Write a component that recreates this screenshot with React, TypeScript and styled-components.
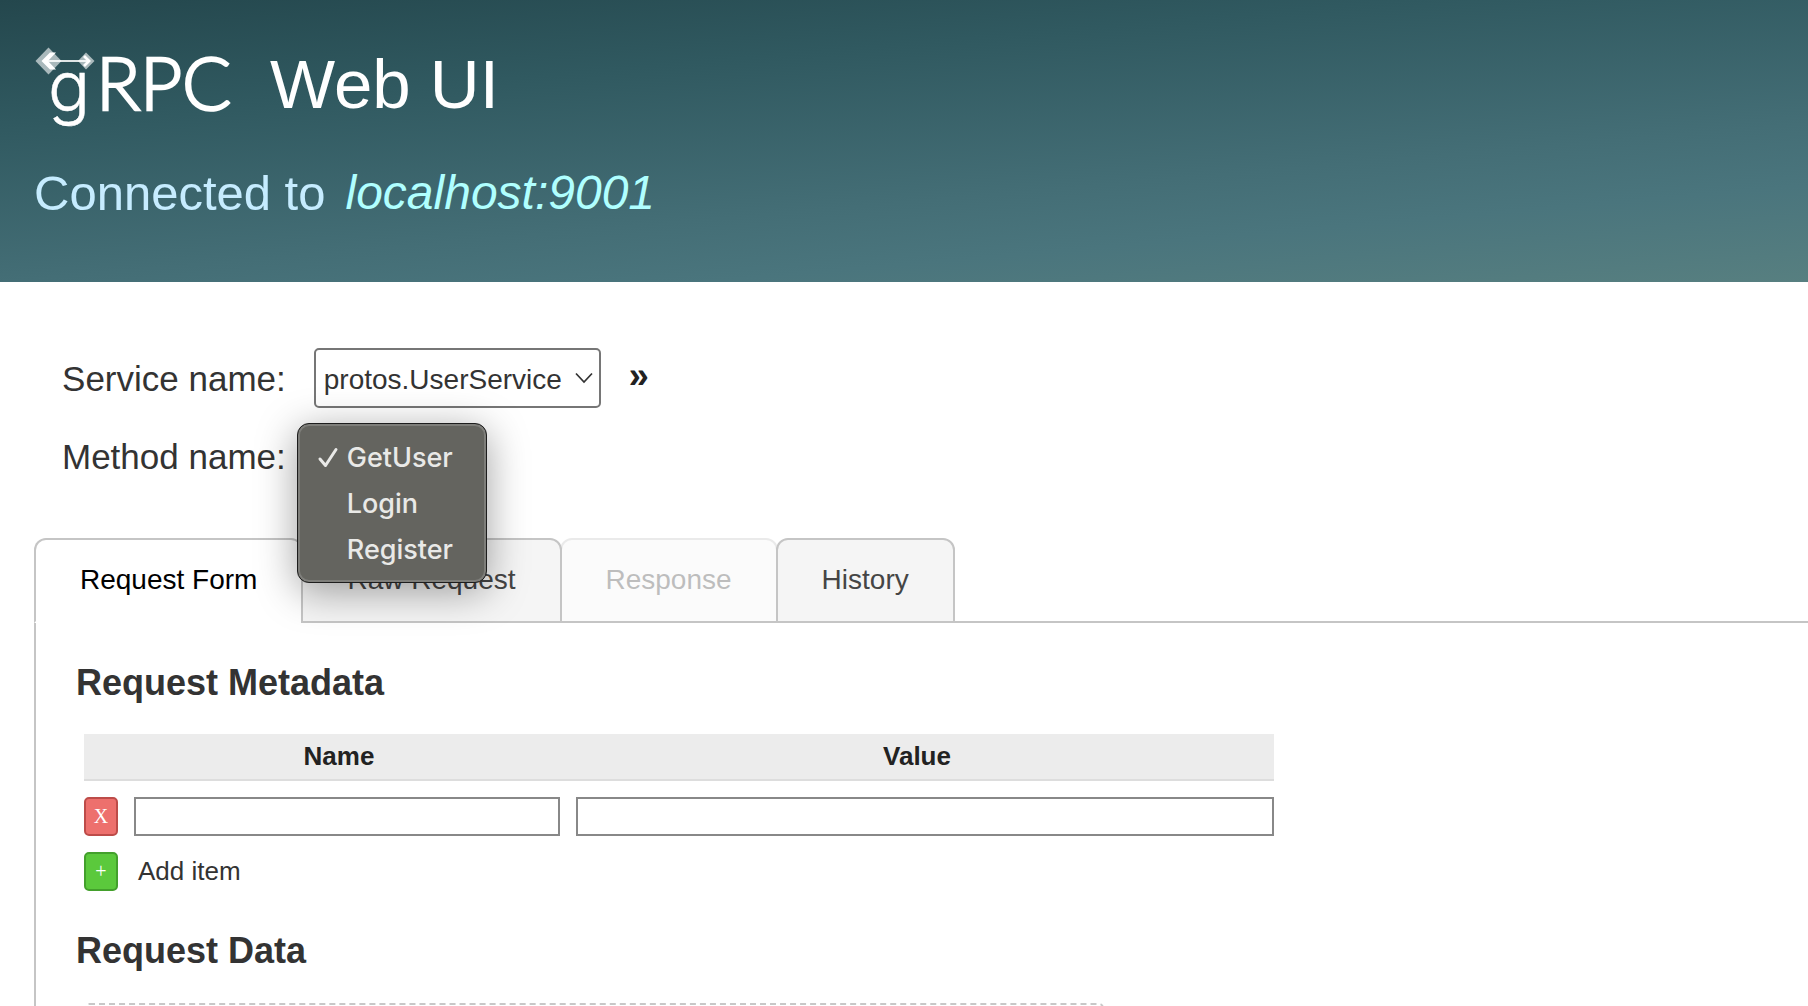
import React, { useState } from "react";
import styled, { createGlobalStyle } from "styled-components";

const sans = `"Liberation Sans", Arial, Helvetica, sans-serif`;

const GlobalStyle = createGlobalStyle`
  *, *::before, *::after { box-sizing: border-box; }
  body { margin: 0; background: #fff; color: #333; font-family: ${sans}; }
`;

const Page = styled.div`
  height: 100vh;
  overflow: hidden;
`;

const Header = styled.header`
  padding: 43px 34px 59px;
  background: linear-gradient(175deg, #24474d 0%, #305960 28%, #446e76 64%, #4a757d 78%, #577f80 100%);
`;

const Title = styled.h1`
  display: flex;
  align-items: center;
  gap: 36px;
  margin: 0;
  color: #fff;
  font-size: 69px;
  font-weight: 400;
  line-height: 84px;
`;

const Logo = styled.svg`
  flex: none;
  width: 200px;
  height: 84px;
  overflow: visible;
`;

const Target = styled.h2`
  display: flex;
  gap: 20px;
  margin: 36px 0 0;
  color: #c6ecff;
  font-size: 49px;
  font-weight: 400;
  line-height: 60px;
`;

const Host = styled.em`
  color: #b0ffff;
  font-size: 48px;
`;

const Main = styled.main`
  padding: 66px 0 0 34px;
`;

const Form = styled.form`
  display: grid;
  grid-template-columns: max-content max-content max-content;
  grid-auto-rows: 60px;
  align-items: center;
  gap: 18px 28px;
  padding-left: 28px;
`;

const FieldLabel = styled.label`
  padding-top: 2px;
  text-align: right;
  font-size: 35px;
  line-height: 60px;
`;

const SelectBox = styled.div`
  display: grid;
  grid-template-columns: auto 16px;
  align-items: center;
  justify-self: start;
  height: 60px;
  padding-right: 8px;
  border: 2px solid #767676;
  border-radius: 5px;
  background: #fff;
`;

const Select = styled.select`
  grid-area: 1 / 1 / 2 / 3;
  height: 56px;
  padding: 2px 28px 0 8px;
  border: 0;
  appearance: none;
  background: transparent;
  color: #333;
  font: 28px ${sans};
`;

const Chevron = styled.svg`
  grid-area: 1 / 2;
  width: 18px;
  height: 12px;
  pointer-events: none;
`;

const ExpandButton = styled.button`
  padding: 0 0 4px;
  border: 0;
  background: none;
  color: #222;
  font: bold 36px/48px ${sans};
`;

const MenuAnchor = styled.div`
  position: relative;
`;

const MenuSpacer = styled.div`
  height: 60px;
`;

const Menu = styled.ul`
  position: absolute;
  z-index: 2;
  top: -3px;
  left: -17px;
  width: 190px;
  margin: 0;
  padding: 11px 2px 9px;
  border: 1px solid #1d1d1d;
  border-radius: 12px;
  background: #64645f;
  box-shadow: inset 0 0 0 2px #7e7e7a, 0 8px 40px rgba(0, 0, 0, 0.38);
  list-style: none;
`;

const MenuItem = styled.button`
  display: flex;
  align-items: center;
  gap: 8px;
  width: 100%;
  height: 46px;
  padding: 0 0 0 17px;
  border: 0;
  background: none;
  color: #e9e9e7;
  font: 500 27px/46px Inter, ${sans};
`;

const Check = styled.svg<{ $on: boolean }>`
  flex: none;
  width: 22px;
  height: 22px;
  visibility: ${(p) => (p.$on ? "visible" : "hidden")};
`;

const Tabs = styled.div`
  display: flex;
  margin: 52px 0 -2px;
`;

const Tab = styled.button<{ $active: boolean }>`
  position: relative;
  height: 85px;
  padding: 0 44px 2px;
  border: 2px solid #c5c5c5;
  border-bottom-color: ${(p) => (p.$active ? "#fff" : "#c5c5c5")};
  border-radius: 12px 12px 0 0;
  background: ${(p) => (p.$active ? "#fff" : "#f5f5f5")};
  color: ${(p) => (p.$active ? "#000" : "#454545")};
  font: 28px ${sans};

  & + & { margin-left: -2px; }

  &:disabled { opacity: 0.35; }
`;

const Panel = styled.section`
  padding: 38px 40px 0;
  border: solid #c5c5c5;
  border-width: 2px 0 0 2px;
`;

const SectionTitle = styled.h2`
  margin: 0;
  font-size: 36px;
  font-weight: 700;
  line-height: 44px;
`;

const MetadataTable = styled.table`
  width: 100%;
  max-width: 1190px;
  margin: 29px 8px 38px;
  border-collapse: collapse;
  table-layout: fixed;
  font-size: 26px;
`;

const ActionCol = styled.col`
  width: 34px;
`;

const NameCol = styled.col`
  width: 442px;
`;

const HeadCell = styled.th`
  height: 46px;
  padding: 0 0 2px;
  border-bottom: 2px solid #ddd;
  background: #ececec;
  color: #222;
  line-height: 30px;
`;

const Cell = styled.td`
  padding: 16px 0 0;
  line-height: 39px;

  & + & { padding-left: 16px; }
`;

const AddLabel = styled.label`
  display: block;
  padding-left: 4px;
`;

const TextInput = styled.input`
  display: block;
  width: 100%;
  height: 39px;
  padding: 0 6px;
  border: 2px solid #888;
  border-radius: 0;
  background: #fff;
  font: 26px ${sans};
`;

const IconButton = styled.button<{ $tone: "remove" | "add" }>`
  display: block;
  width: 34px;
  height: 39px;
  padding: 0 0 2px;
  border: 2px solid ${(p) => (p.$tone === "add" ? "#43a02c" : "#bd4c49")};
  border-radius: 5px;
  background: ${(p) => (p.$tone === "add" ? "#5bc93c" : "#ed706d")};
  color: #fff;
  font: 20px/30px "Liberation Serif", "Times New Roman", serif;
`;

const DataBox = styled.div`
  width: 100%;
  max-width: 1020px;
  height: 320px;
  margin: 30px 8px 0;
  border: 2px dashed #c8c8c8;
  border-radius: 5px;
`;

const METHODS = ["GetUser", "Login", "Register"];
const TABS = ["Request Form", "Raw Request", "Response", "History"];

function GrpcLogo() {
  return (
    <Logo viewBox="0 0 200 84" role="img" aria-label="gRPC">
      <path d="M1.500 18 L14.500 4.500 L27.500 18 L14.500 31.500 Z" fill="#fff" fillOpacity="0.6" />
      <path d="M44 18 L52 9.500 L60.500 18 L52 26.500 Z" fill="#fff" fillOpacity="0.6" />
      <path d="M16 9.500 H22 L14 18 L22 26.500 H16 L7.500 18 Z" fill="#fff" />
      <path d="M50 13 L55 18 L50 23" fill="none" stroke="#fff" strokeWidth="2.800" />
      <path d="M13 18 H54" stroke="#fff" strokeOpacity="0.85" strokeWidth="2" />
      <g fill="#fff" stroke="#fff" fontFamily="Lato, sans-serif" fontSize="73" fontWeight="300">
        <text x="14" y="68" fontFamily="Inter, sans-serif" fontSize="70" strokeWidth="0.500">g</text>
        <g strokeWidth="2.400">
          <text x="62" y="67">R</text>
          <text x="106" y="67">P</text>
          <text x="148" y="67">C</text>
        </g>
      </g>
    </Logo>
  );
}

export default function App() {
  const [method, setMethod] = useState("GetUser");
  const [tab, setTab] = useState("Request Form");

  return (
    <Page>
      <GlobalStyle />
      <Header>
        <Title>
          <GrpcLogo />
          Web UI
        </Title>
        <Target>
          Connected to <Host>localhost:9001</Host>
        </Target>
      </Header>
      <Main>
        <Form onSubmit={(e) => e.preventDefault()}>
          <FieldLabel htmlFor="service">Service name:</FieldLabel>
          <SelectBox>
            <Select id="service" defaultValue="protos.UserService">
              <option>protos.UserService</option>
            </Select>
            <Chevron viewBox="0 0 18 12" fill="none" stroke="#333" strokeWidth="1.700">
              <path d="M1 1.500 L9 10 L17 1.500" />
            </Chevron>
          </SelectBox>
          <ExpandButton type="button" aria-label="Show service description">»</ExpandButton>

          <FieldLabel id="method-label" htmlFor={`method-${method}`}>Method name:</FieldLabel>
          <MenuAnchor>
            <MenuSpacer />
            <Menu role="listbox" aria-labelledby="method-label">
              {METHODS.map((name) => (
                <li key={name} role="presentation">
                  <MenuItem
                    id={`method-${name}`}
                    type="button"
                    role="option"
                    aria-selected={name === method}
                    onClick={() => setMethod(name)}
                  >
                    <Check $on={name === method} viewBox="0 0 22 22" fill="none" stroke="#e9e9e7" strokeWidth="3" strokeLinecap="round" strokeLinejoin="round">
                      <path d="M3 12 L8.500 18.500 L19 2.500" />
                    </Check>
                    {name}
                  </MenuItem>
                </li>
              ))}
            </Menu>
          </MenuAnchor>
        </Form>

        <Tabs role="tablist">
          {TABS.map((name) => (
            <Tab
              key={name}
              type="button"
              role="tab"
              aria-selected={name === tab}
              $active={name === tab}
              disabled={name === "Response"}
              onClick={() => setTab(name)}
            >
              {name}
            </Tab>
          ))}
        </Tabs>

        <Panel role="tabpanel">
          <SectionTitle>Request Metadata</SectionTitle>
          <MetadataTable>
            <colgroup>
              <ActionCol />
              <NameCol />
              <col />
            </colgroup>
            <thead>
              <tr>
                <HeadCell />
                <HeadCell scope="col">Name</HeadCell>
                <HeadCell scope="col">Value</HeadCell>
              </tr>
            </thead>
            <tbody>
              <tr>
                <Cell>
                  <IconButton type="button" $tone="remove" aria-label="Remove item">X</IconButton>
                </Cell>
                <Cell>
                  <TextInput type="text" aria-label="Name" />
                </Cell>
                <Cell>
                  <TextInput type="text" aria-label="Value" />
                </Cell>
              </tr>
              <tr>
                <Cell>
                  <IconButton type="button" id="add-item" $tone="add">+</IconButton>
                </Cell>
                <Cell colSpan={2}>
                  <AddLabel htmlFor="add-item">Add item</AddLabel>
                </Cell>
              </tr>
            </tbody>
          </MetadataTable>
          <SectionTitle>Request Data</SectionTitle>
          <DataBox />
        </Panel>
      </Main>
    </Page>
  );
}
